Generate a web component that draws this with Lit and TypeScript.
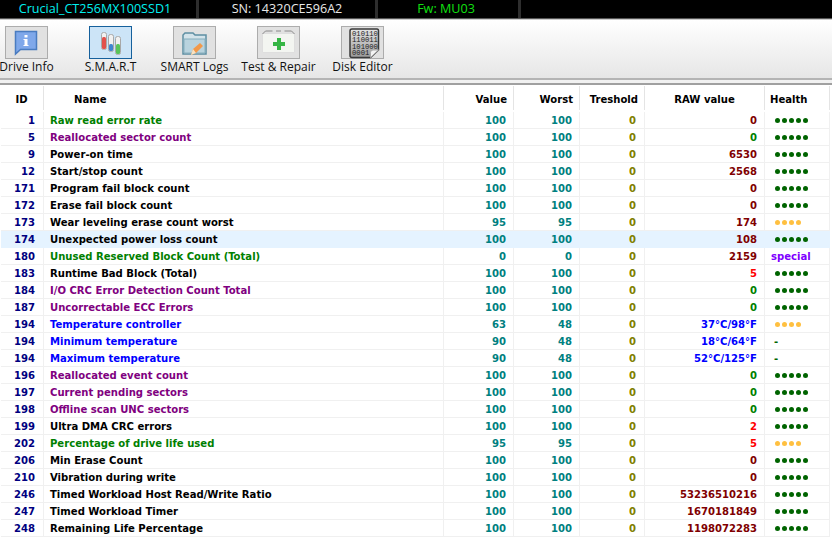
import {LitElement, html, css, svg} from 'lit';
import {customElement} from 'lit/decorators.js';

type Row = [number, string, string, number, number, string, string, string];

const G = 'good';
const W = 'warn';
const S = 'special';
const N = 'none';

// id, name, name colour, value, worst, raw, raw colour, health
const ROWS: Row[] = [
  [1, 'Raw read error rate', 'green', 100, 100, '0', 'dark', G],
  [5, 'Reallocated sector count', 'purple', 100, 100, '0', 'green', G],
  [9, 'Power-on time', 'black', 100, 100, '6530', 'dark', G],
  [12, 'Start/stop count', 'black', 100, 100, '2568', 'dark', G],
  [171, 'Program fail block count', 'black', 100, 100, '0', 'dark', G],
  [172, 'Erase fail block count', 'black', 100, 100, '0', 'dark', G],
  [173, 'Wear leveling erase count worst', 'black', 95, 95, '174', 'dark', W],
  [174, 'Unexpected power loss count', 'black', 100, 100, '108', 'dark', G],
  [180, 'Unused Reserved Block Count (Total)', 'green', 0, 0, '2159', 'dark', S],
  [183, 'Runtime Bad Block (Total)', 'black', 100, 100, '5', 'red', G],
  [184, 'I/O CRC Error Detection Count Total', 'purple', 100, 100, '0', 'green', G],
  [187, 'Uncorrectable ECC Errors', 'purple', 100, 100, '0', 'green', G],
  [194, 'Temperature controller', 'blue', 63, 48, '37°C/98°F', 'blue', W],
  [194, 'Minimum temperature', 'blue', 90, 48, '18°C/64°F', 'blue', N],
  [194, 'Maximum temperature', 'blue', 90, 48, '52°C/125°F', 'blue', N],
  [196, 'Reallocated event count', 'purple', 100, 100, '0', 'green', G],
  [197, 'Current pending sectors', 'purple', 100, 100, '0', 'green', G],
  [198, 'Offline scan UNC sectors', 'purple', 100, 100, '0', 'green', G],
  [199, 'Ultra DMA CRC errors', 'black', 100, 100, '2', 'red', G],
  [202, 'Percentage of drive life used', 'green', 95, 95, '5', 'red', W],
  [206, 'Min Erase Count', 'black', 100, 100, '0', 'dark', G],
  [210, 'Vibration during write', 'black', 100, 100, '0', 'dark', G],
  [246, 'Timed Workload Host Read/Write Ratio', 'black', 100, 100, '53236510216', 'dark', G],
  [247, 'Timed Workload Timer', 'black', 100, 100, '1670181849', 'dark', G],
  [248, 'Remaining Life Percentage', 'black', 100, 100, '1198072283', 'dark', G],
];

const ICONS = {
  info: svg`<svg viewBox="0 0 43 33" width="43" height="33">
    <path d="M10.5 5.5h21v18H15.5l-5 4.5z" fill="#7fa8ea" stroke="#4a7cc0" stroke-width="1.5"/>
    <rect x="19.5" y="9" width="3" height="2.5" fill="#fff"/>
    <rect x="19.5" y="13" width="3" height="6" fill="#fff"/>
    <rect x="18.5" y="13" width="2" height="1" fill="#fff"/>
    <rect x="18.5" y="19" width="5" height="1" fill="#fff"/>
  </svg>`,
  smart: svg`<svg viewBox="0 0 43 33" width="43" height="33">
    <rect x="12.5" y="6.5" width="5" height="17" rx="2" fill="#f1f1f1" stroke="#a8a8a8"/>
    <rect x="13" y="11" width="4" height="12" rx="1.5" fill="#e2504a"/>
    <rect x="19.5" y="8.5" width="5" height="17" rx="2" fill="#f1f1f1" stroke="#a8a8a8"/>
    <rect x="20" y="18" width="4" height="7" rx="1.5" fill="#3f86d0"/>
    <rect x="26.5" y="10.5" width="5" height="18" rx="2" fill="#f1f1f1" stroke="#a8a8a8"/>
    <rect x="27" y="18" width="4" height="10" rx="1.5" fill="#58c45a"/>
  </svg>`,
  logs: svg`<svg viewBox="0 0 43 33" width="43" height="33">
    <path d="M10 28V9l2-2h8l2 2h11v19z" fill="#d3e3ea" stroke="#5e8fa3" stroke-width="1.5"/>
    <path d="M11 13h21v14H11z" fill="#b9d3de" stroke="#86aebd"/>
    <path d="M18 29l2-6 7-6 3 3-7 7z" fill="#f2994a"/>
    <path d="M18 29l2-6 3 4z" fill="#f7e3c4"/>
  </svg>`,
  repair: svg`<svg viewBox="0 0 43 33" width="43" height="33">
    <path d="M5.5 7.5h32v19h-32z" fill="#f3f5f1" stroke="#dedede"/>
    <path d="M5.5 8l3-3h7M27.5 5h7l3 3M19 5h5" fill="none" stroke="#8a8a8a"/>
    <path d="M20 12h4v4h4v4h-4v4h-4v-4h-4v-4h4z" fill="#35b544"/>
  </svg>`,
  disk: svg`<svg viewBox="0 0 43 33" width="43" height="33">
    <defs>
      <linearGradient id="sheet" x1="0" y1="0" x2="0" y2="1">
        <stop offset="0" stop-color="#e4e4e4"/>
        <stop offset="1" stop-color="#9a9a9a"/>
      </linearGradient>
    </defs>
    <path d="M11 3h25q1.5 0 1.5 2v19l-8 7.500H11q-2 0-2-2V5q0-2 2-2z" fill="url(#sheet)" stroke="#3a3a3a" stroke-width="1.5"/>
    <path d="M29.5 31.5v-5q0-2.500 2.500-2.500h5.500z" fill="#f4f4f4" stroke="#aaa"/>
    <g font-family="'Liberation Mono', monospace" font-size="7.2" fill="#222">
      <text x="11" y="9.5">010110</text>
      <text x="11" y="16">110011</text>
      <text x="11" y="22.5">101000</text>
      <text x="11" y="29">0001</text>
    </g>
  </svg>`,
};

const TOOLS: [keyof typeof ICONS, string, boolean][] = [
  ['info', 'Drive Info', false],
  ['smart', 'S.M.A.R.T', true],
  ['logs', 'SMART Logs', false],
  ['repair', 'Test & Repair', false],
  ['disk', 'Disk Editor', false],
];

@customElement('app-root')
export class AppRoot extends LitElement {
  static override styles = css`
    :host {
      display: block;
      width: 832px;
      height: 537px;
      overflow: hidden;
      background: #fff;
      font-family: 'DejaVu Sans Condensed', 'DejaVu Sans', sans-serif;
      font-stretch: condensed;
      font-size: 11.2px;
    }

    .status {
      display: flex;
      height: 18px;
      background: #000;
      font-family: 'Open Sans', sans-serif;
      font-stretch: normal;
      font-size: 12.6px;
      line-height: 18px;
      border-bottom: 1px solid #555;
    }
    .status div {
      box-sizing: border-box;
      border-right: 3px solid #2e2e2e;
      text-align: center;
    }
    .model { width: 199px; color: #00f0f0; padding-right: 6px; }
    .sn { width: 179px; color: #e8e8e8; }
    .fw { width: 143px; color: #10e010; padding-right: 4px; }

    .toolbar {
      display: flex;
      gap: 31px;
      box-sizing: border-box;
      height: 61px;
      padding-top: 6px;
      background: linear-gradient(#fff, #e6e6e6);
      border-top: 1px solid #ccc;
      border-bottom: 2px solid #b4b4b4;
    }
    .tool {
      width: 53px;
      display: flex;
      flex-direction: column;
      align-items: center;
      font-family: 'Open Sans', sans-serif;
      font-stretch: normal;
      font-size: 12px;
      line-height: 16px;
      color: #111;
    }
    .tool .box {
      flex: none;
      box-sizing: border-box;
      width: 43px;
      height: 33px;
      border: 1px solid #acacac;
      background: #e1e1e1;
    }
    .tool .box svg { display: block; margin: -1px; }
    .tool.active .box { border-color: #15609c; background: #cce4f7; }
    .tool span { white-space: nowrap; }

    .gap {
      height: 3px;
      background: #f1f1f1;
      border-bottom: 2px solid #a0a0a0;
    }

    .head, .row {
      display: grid;
      width: 830px;
    }
    .head {
      grid-template-columns: 44px 400px 70px 66px 65px 120px 65px;
      height: 26px;
      padding-top: 1px;
      line-height: 27px;
      color: #000;
      font-weight: bold;
    }
    .head div { border-right: 1px solid #e4e4e4; box-sizing: border-box; height: 24px; white-space: nowrap; }
    .head .c { text-align: center; }
    .head .r { text-align: right; padding-right: 6px; }
    .head .l { padding-left: 5px; }
    .head .name { padding-left: 30px; }
    .row {
      box-sizing: border-box;
      height: 17px;
      line-height: 17px;
      font-weight: bold;
      padding-left: 1px;
      grid-template-columns: 43px 400px 70px 66px 65px 120px 65px;
    }
    .row > div {
      box-sizing: border-box;
      border-right: 1px solid #f0f0f0;
      border-bottom: 1px solid #f0f0f0;
      height: 17px;
      white-space: nowrap;
      overflow: hidden;
    }
    .row.sel > div { background: #e5f3ff; border-color: #e5f3ff; }
    .id { color: #000080; text-align: right; padding-right: 8px; }
    .nm { padding-left: 6px; }
    .val { color: #008080; text-align: right; padding-right: 7px; }
    .thr { color: #808000; text-align: right; padding-right: 8px; }
    .raw { text-align: right; padding-right: 7px; }
    .hl { padding-left: 9px; }

    .black { color: #000; }
    .green { color: #008000; }
    .purple { color: #800080; }
    .blue { color: #0000ff; }
    .dark { color: #800000; }
    .red { color: #ff0000; }

    .dots { display: flex; gap: 2px; height: 17px; align-items: center; padding-left: 1px; }
    .dots i { flex: none; width: 5px; height: 5px; border-radius: 50%; background: #006400; }
    .dots.warn i { background: #ffc040; }
    .special { color: #8000ff; margin-left: -3px; }
    .dash { color: #006400; }
  `;

  health(h: string) {
    if (h === S) return html`<span class="special">special</span>`;
    if (h === N) return html`<span class="dash">-</span>`;
    const n = h === W ? 4 : 5;
    return html`<div class="dots ${h}">${Array.from({length: n}, () => html`<i></i>`)}</div>`;
  }

  override render() {
    return html`
      <div class="status">
        <div class="model">Crucial_CT256MX100SSD1</div>
        <div class="sn">SN: 14320CE596A2</div>
        <div class="fw">Fw: MU03</div>
      </div>
      <div class="toolbar">
        ${TOOLS.map(
          ([icon, label, active]) => html`<div class="tool ${active ? 'active' : ''}">
            <div class="box">${ICONS[icon]}</div>
            <span>${label}</span>
          </div>`
        )}
      </div>
      <div class="gap"></div>
      <div class="head">
        <div class="c">ID</div>
        <div class="name">Name</div>
        <div class="r">Value</div>
        <div class="r">Worst</div>
        <div class="r">Treshold</div>
        <div class="c">RAW value</div>
        <div class="l">Health</div>
      </div>
      ${ROWS.map(
        (r, i) => html`<div class="row ${i === 7 ? 'sel' : ''}">
          <div class="id">${r[0]}</div>
          <div class="nm ${r[2]}">${r[1]}</div>
          <div class="val">${r[3]}</div>
          <div class="val">${r[4]}</div>
          <div class="thr">0</div>
          <div class="raw ${r[6]}">${r[5]}</div>
          <div class="hl">${this.health(r[7])}</div>
        </div>`
      )}
    `;
  }
}
